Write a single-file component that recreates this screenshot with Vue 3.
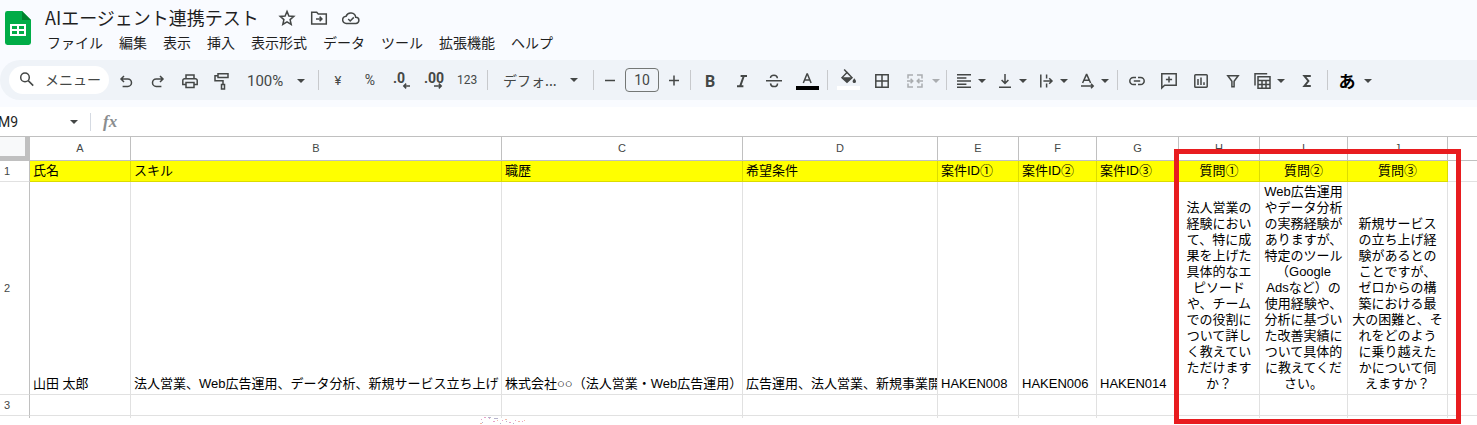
<script setup>
import { ref } from 'vue'

const menus = ['ファイル', '編集', '表示', '挿入', '表示形式', 'データ', 'ツール', '拡張機能', 'ヘルプ']

const undo = { label: '元に戻す', d: 'M8 5 5 8l3 3M5.4 8h6.4a3.7 3.7 0 0 1 0 7.4H6.6' }
const redo = { label: 'やり直す', d: 'M12 5l3 3-3 3M14.6 8H8.2a3.7 3.7 0 0 0 0 7.4h5.2' }
const print = { label: '印刷', d: 'M6 7.4V4h8v3.4M5.6 13.4H2.8V9.5a1.8 1.8 0 0 1 1.8-1.8h10.8a1.8 1.8 0 0 1 1.8 1.8v3.9h-2.8M6 11.6h8v4.8H6z' }
const paint = { label: '書式を貼り付け', d: 'M6 2.8h10v3.8H6zM6 4.8H3v5h8v3.4M9.5 13.4h3v4.6h-3z' }

const numberTools = [
  { label: '通貨', text: '¥', size: 13, x: 10, y: 13 },
  { label: 'パーセント', text: '%', size: 14, x: 10, y: 13 },
  { label: '小数点以下の桁数を減らす', text: '.0', size: 14, bold: true, x: 7, y: 11, d: 'M18 15h-6M14.2 12.6 11.8 15l2.4 2.4' },
  { label: '小数点以下の桁数を増やす', text: '.00', size: 14, bold: true, x: 10, y: 11, d: 'M10 15h7M14.8 12.6l2.4 2.4-2.4 2.4' },
  { label: '表示形式の詳細', text: '123', size: 12, x: 10, y: 12, wide: true }
]

const styleTools = [
  { label: '太字', text: 'B', size: 16, bold: true, x: 10, y: 15 },
  { label: '斜体', d: 'M8.6 5H15M5 15.2h6.4M11.8 5 8.2 15.2', weight: 2 },
  { label: '取り消し線', d: 'M2 9.8h16M13.4 7.2c-.2-2-1.6-3-3.4-3s-3.5 1-3.5 2.8M6.5 12.4c.2 2 1.6 3.2 3.5 3.2s3.5-1 3.5-3.2' },
  { label: 'テキストの色', d: 'M6.3 12 10 3h.4l3.7 9M7.6 9h5.2', bar: '#000000', wide: true }
]

const cellTools = [
  { label: '塗りつぶしの色', d: 'M6.2-1.6 9 1.4M9 1.4 4 6.6l5 4.6 5-4.6z', f: 'M4 6.2h10l-5 5zM16.3 7.2c1 1.4 1.7 2.2 1.7 3.2a1.7 1.7 0 0 1-3.4 0c0-1 .7-1.8 1.7-3.2z', bar: '#ffffff', wide: true },
  { label: '枠線', d: 'M3.8 3.8h12.4v12.4H3.8zM10 3.8v12.4M3.8 10h12.4', wide: true },
  { label: 'セルを結合', d: 'M8 4H3v3.4M3 12.6V16h5M12 4h5v3.4M17 12.6V16h-5M2 10h5.6M5.6 7.8 7.8 10l-2.2 2.2M18 10h-5.6M14.4 7.8 12.2 10l2.2 2.2', drop: true, loose: true, disabled: true }
]

const layoutTools = [
  { label: '水平方向の配置', d: 'M3 3.8h14M3 7h9.4M3 10.1h14M3 13.2h9.4M3 16.3h14', drop: true },
  { label: '垂直方向の配置', d: 'M10 3v9M6.6 9l3.4 3.4L13.4 9M4 16.2h12', drop: true },
  { label: 'テキストを折り返す', d: 'M4.8 3.4v13.2M10.6 3.4v4M10.6 12.6v4M7.4 10h8.4M13.2 7.2 16 10l-2.8 2.8', drop: true },
  { label: 'テキストの回転', d: 'M5.6 12 9.4 3.6h.4l3.8 8.4M7 9.2h5.2M4 15h12M14 12.8l2.2 2.2-2.2 2.2', drop: true }
]

const insertTools = [
  { label: 'リンクを挿入', d: 'M9 6.4H6.4a3.6 3.6 0 0 0 0 7.2H9M11 6.4h2.6a3.6 3.6 0 0 1 0 7.2H11M6.8 10h6.4' },
  { label: 'コメントを挿入', d: 'M2.8 17V2.8h14.4v11.4H5.6zM10 5.4v6.2M6.9 8.5h6.2' },
  { label: 'グラフを挿入', d: 'M4.6 3.8h10.8a.8.8 0 0 1 .8.8v10.8a.8.8 0 0 1-.8.8H4.6a.8.8 0 0 1-.8-.8V4.6a.8.8 0 0 1 .8-.8zM7 8v6M10 6.4V14M13 11.2V14' },
  { label: 'フィルタを作成', d: 'M4.8 4.8h10.4l-4.1 5.4v5.6H8.9v-5.6z' },
  { label: 'テーブル', d: 'M2 14.4V2.8h12.2M5 5.8h12v11.4H5zM5 9.6h12M9 9.6v7.6M13 9.6v7.6M5 13.4h12', drop: true },
  { label: '関数', d: 'M13.8 5H7.4l4 5-4 5h6.4', weight: 2, wide: true }
]

const nameBox = ref('M9')
const fontSize = ref('10')

const columns = ['A', 'B', 'C', 'D', 'E', 'F', 'G', 'H', 'I', 'J']

const titles = ['氏名', 'スキル', '職歴', '希望条件', '案件ID①', '案件ID②', '案件ID③', '質問①', '質問②', '質問③']

const person = [
  '山田 太郎',
  '法人営業、Web広告運用、データ分析、新規サービス立ち上げ',
  '株式会社○○（法人営業・Web広告運用）',
  '広告運用、法人営業、新規事業開',
  'HAKEN008',
  'HAKEN006',
  'HAKEN014',
  '法人営業の\n経験におい\nて、特に成\n果を上げた\n具体的なエ\nピソード\nや、チーム\nでの役割に\nついて詳し\nく教えてい\nただけます\nか？',
  'Web広告運用\nやデータ分析\nの実務経験が\nありますが、\n特定のツール\n（Google\nAdsなど）の\n使用経験や、\n分析に基づい\nた改善実績に\nついて具体的\nに教えてくだ\nさい。',
  '新規サービス\nの立ち上げ経\n験があるとの\nことですが、\nゼロからの構\n築における最\n大の困難と、そ\nれをどのよう\nに乗り越えた\nかについて伺\nえますか？'
]

const groups = [numberTools, styleTools, cellTools, layoutTools, insertTools]
</script>

<template>
  <div class="app">
    <header class="top">
      <a class="logo" href="#" aria-label="スプレッドシート ホーム">
        <svg width="26" height="34" viewBox="0 0 26 34">
          <path d="M2.4 0H17l9 9v22.600a2.400 2.400 0 0 1-2.400 2.400H2.400A2.400 2.400 0 0 1 0 31.600V2.400A2.400 2.400 0 0 1 2.400 0z" fill="#00ac47" />
          <path d="M17 0l9 9h-9z" fill="#00832d" />
          <path d="M5 13h16v12H5z" fill="#fff" />
          <path d="M7 15h5v3H7zM14 15h5v3h-5zM7 20h5v3H7zM14 20h5v3h-5z" fill="#00ac47" />
        </svg>
      </a>
      <div class="heading">
        <div class="title-row">
          <h1>AIエージェント連携テスト</h1>
          <button class="mini" aria-label="スターを付ける">
            <svg width="18" height="18" viewBox="0 0 18 18"><path d="M9 2.400l1.900 4.600 4.900.4-3.700 3.200 1.100 4.900L9 12.900l-4.200 2.600 1.100-4.900L2.200 7.400l4.900-.4z" /></svg>
          </button>
          <button class="mini" aria-label="移動">
            <svg width="18" height="18" viewBox="0 0 18 18"><path d="M1.700 4V3.200h5l1.600 1.800h8v10H1.700zM6 9.900h5.600M9.600 7.600l2.300 2.300-2.300 2.300" /></svg>
          </button>
          <button class="mini" aria-label="ドキュメントのステータス">
            <svg width="18" height="18" viewBox="0 0 18 18"><path d="M4.400 14.400a3.600 3.600 0 0 1-.3-7.200 5 5 0 0 1 9.600 1 3.100 3.100 0 0 1 .2 6.200zM6.200 10l2 2 3.600-3.600" /></svg>
          </button>
        </div>
        <nav class="menus">
          <button v-for="menu in menus" :key="menu">{{ menu }}</button>
        </nav>
      </div>
    </header>

    <div class="band">
      <div class="toolbar">
        <label class="search">
          <svg class="icon" width="20" height="20" viewBox="0 0 20 20"><circle cx="8" cy="8.400" r="4.300" /><path d="M11.200 11.600l5 5" /></svg>
          <input type="text" placeholder="メニュー" aria-label="メニューを検索" />
        </label>
        <button v-for="tool in [undo, redo, print, paint]" :key="tool.label" class="tool" :aria-label="tool.label">
          <svg class="icon" width="20" height="20" viewBox="0 0 20 20"><path :d="tool.d" /></svg>
        </button>
        <label class="pick zoom">
          <select aria-label="ズーム"><option>100%</option></select>
          <svg class="caret" width="10" height="6" viewBox="0 0 10 6"><path d="M1 1h8L5 5z" /></svg>
        </label>
        <template v-for="(group, g) in groups" :key="g">
          <span class="sep"></span>
          <template v-if="g === 1">
            <label class="pick font">
              <select aria-label="フォント"><option>デフォ...</option></select>
              <svg class="caret" width="10" height="6" viewBox="0 0 10 6"><path d="M1 1h8L5 5z" /></svg>
            </label>
            <span class="sep"></span>
            <button class="tool step" aria-label="フォントサイズを縮小">
              <svg class="icon" width="20" height="20" viewBox="0 0 20 20"><path d="M5 9.500h10" /></svg>
            </button>
            <input v-model="fontSize" class="size" type="text" aria-label="フォントサイズ" />
            <button class="tool step" aria-label="フォントサイズを拡大">
              <svg class="icon" width="20" height="20" viewBox="0 0 20 20"><path d="M5 9.500h10M10 4.500v10" /></svg>
            </button>
            <span class="sep"></span>
          </template>
          <button
            v-for="tool in group"
            :key="tool.label"
            class="tool"
            :class="{ wide: tool.wide, drop: tool.drop, loose: tool.loose }"
            :disabled="tool.disabled"
            :aria-label="tool.label"
          >
            <svg class="icon" width="20" height="20" viewBox="0 0 20 20">
              <path v-if="tool.d" :d="tool.d" :stroke-width="tool.weight || 1.5" />
              <path v-if="tool.f" class="solid" :d="tool.f" />
              <rect v-if="tool.bar" class="bar" x="-1" y="15" width="23" height="4" :fill="tool.bar" />
              <text v-if="tool.text" :class="{ bold: tool.bold }" :x="tool.x" :y="tool.y + 1" :font-size="tool.size">{{ tool.text }}</text>
            </svg>
            <svg v-if="tool.drop" class="caret" width="10" height="6" viewBox="0 0 10 6"><path d="M1 1h8L5 5z" /></svg>
          </button>
        </template>
        <span class="sep"></span>
        <button class="tool drop loose kana">
          <span>あ</span>
          <svg class="caret" width="10" height="6" viewBox="0 0 10 6"><path d="M1 1h8L5 5z" /></svg>
        </button>
      </div>
    </div>

    <div class="formula">
      <input v-model="nameBox" class="name" type="text" aria-label="名前ボックス" />
      <svg class="caret" width="10" height="6" viewBox="0 0 10 6"><path d="M1 1h8L5 5z" /></svg>
      <span class="rule"></span>
      <label class="fx" for="formula-input">fx</label>
      <input id="formula-input" class="entry" type="text" />
    </div>

    <main class="sheet">
      <table>
        <colgroup>
          <col class="c-head" />
          <col v-for="c in columns" :key="c" :class="'c-' + c.toLowerCase()" />
          <col />
        </colgroup>
        <thead>
          <tr>
            <td class="corner"></td>
            <th v-for="c in columns" :key="c" scope="col">{{ c }}</th>
            <th></th>
          </tr>
        </thead>
        <tbody>
          <tr class="titles">
            <th scope="row">1</th>
            <td v-for="(t, i) in titles" :key="t" :class="{ center: i > 6 }">{{ t }}</td>
            <td class="rest"></td>
          </tr>
          <tr class="person">
            <th scope="row">2</th>
            <td v-for="(t, i) in person" :key="i" :class="{ center: i > 6 }">{{ t }}</td>
            <td class="rest"></td>
          </tr>
          <tr class="blank">
            <th scope="row">3</th>
            <td v-for="c in columns" :key="c"></td>
            <td class="rest"></td>
          </tr>
          <tr class="cut">
            <th></th>
            <td v-for="c in columns" :key="c"></td>
            <td class="rest"></td>
          </tr>
        </tbody>
      </table>
      <div class="highlight"></div>
      <svg class="specks" width="62" height="8" viewBox="0 0 62 8" aria-hidden="true">
        <path d="M1 2h1v1H1zM4 0h2v1H4zM9 1h1v1H9zM13 4h2v1h-2zM22 3h1v1h-1zM29 5h2v1h-2zM35 3h1v1h-1zM42 4h1v1h-1z" fill="#e6a3c8" />
        <path d="M2 5h1v1H2zM8 0h3v1H8zM14 1h4v1h-4zM20 6h1v1h-1zM26 4h1v1h-1zM33 6h1v1h-1z" fill="#b5b3cc" />
        <path d="M0 6h2v1H0zM17 3h1v1h-1zM25 2h2v1h-2zM38 4h2v1h-2zM44 3h1v1h-1z" fill="#f2b9a8" />
      </svg>
    </main>
  </div>
</template>

<style>
body {
  margin: 0;
  background: #fff;
}
</style>

<style scoped>
.app {
  color: #1f1f1f;
  font-family: "Liberation Sans", "Noto Sans CJK JP", sans-serif;
}

button,
input,
select {
  margin: 0;
  padding: 0;
  border: 0;
  background: none;
  color: inherit;
  font: inherit;
}

.top {
  display: flex;
  gap: 14px;
  height: 60px;
  padding-left: 5px;
  background: #f9fbff;
  box-sizing: border-box;
  font-family: "Noto Sans CJK JP", sans-serif;
}

.logo {
  padding-top: 11px;
}

.logo svg,
.mini svg {
  display: block;
}

.title-row {
  display: flex;
  align-items: center;
  gap: 14px;
  height: 24px;
  padding-top: 6px;
}

h1 {
  margin: 0 5px 0 0;
  padding-bottom: 2px;
  font-size: 18px;
  font-weight: 400;
  line-height: 24px;
}

.mini path {
  fill: none;
  stroke: #444746;
  stroke-width: 1.5;
}

.menus {
  display: flex;
  gap: 16px;
  padding: 2px 0 0 2px;
  font-size: 14px;
  line-height: 20px;
}

.band {
  padding-bottom: 7px;
  background: #f9fbff;
}

.toolbar {
  display: flex;
  align-items: center;
  height: 40px;
  padding-left: 9px;
  border-radius: 20px 0 0 20px;
  background: #eff3f8;
  color: #444746;
}

.search {
  display: flex;
  align-items: center;
  gap: 8px;
  width: 100px;
  height: 28px;
  margin-right: 1px;
  padding: 0 0 2px 8px;
  border-radius: 14px;
  background: #fff;
  box-sizing: border-box;
}

.search input {
  width: 60px;
  font-family: "Noto Sans CJK JP", sans-serif;
  font-size: 14px;
  line-height: 20px;
}

.search input::placeholder {
  color: #444746;
  opacity: 1;
}

.tool {
  display: flex;
  align-items: center;
  justify-content: center;
  flex: none;
  width: 32px;
  height: 28px;
  padding-top: 2px;
  box-sizing: border-box;
}

.tool.wide {
  width: 34px;
}

.tool.step {
  width: 26px;
}

.tool.drop {
  justify-content: flex-start;
  gap: 3px;
  width: 41px;
  padding-left: 4px;
}

.tool.loose {
  gap: 6px;
  width: 44px;
  padding-left: 6px;
}

.tool:disabled {
  opacity: 0.4;
}

.icon {
  flex: none;
  overflow: visible;
}

.icon path,
.icon circle {
  fill: none;
  stroke: #444746;
  stroke-width: 1.5;
}

.icon path[stroke-width="2"] {
  stroke-width: 2;
}

.icon .solid {
  fill: #444746;
  stroke: none;
}

.icon text {
  fill: #444746;
  font-family: Roboto, sans-serif;
  text-anchor: middle;
}

.icon .bold {
  font-weight: 700;
}

.caret {
  flex: none;
}

.caret path {
  fill: #444746;
}

.sep {
  flex: none;
  width: 1px;
  height: 20px;
  margin: 0 3px;
  background: #c7c9cc;
}

.pick {
  display: flex;
  align-items: center;
  flex: none;
  height: 28px;
  padding-top: 2px;
  box-sizing: border-box;
}

.pick select {
  appearance: none;
  font-size: 15px;
  line-height: 20px;
}

.zoom {
  width: 77px;
  padding-left: 9px;
}

.zoom select {
  width: 49px;
  font-family: Roboto, sans-serif;
}

.font {
  width: 99px;
  padding: 0 0 0 12px;
}

.font select {
  width: 66px;
  font-family: "Noto Sans CJK JP", sans-serif;
  font-size: 14px;
}

.size {
  width: 34px;
  height: 24px;
  margin: 0 2px;
  border: 1px solid #747775;
  border-radius: 4px;
  box-sizing: border-box;
  font-family: Roboto, sans-serif;
  font-size: 14px;
  text-align: center;
}

.kana span {
  width: 20px;
  color: #000;
  font-family: "Noto Sans CJK JP", sans-serif;
  font-size: 17px;
  font-weight: 700;
  line-height: 20px;
}

.formula {
  display: flex;
  align-items: center;
  height: 29px;
}

.name {
  width: 71px;
  margin-left: -2px;
  font-family: Roboto, sans-serif;
  font-size: 14px;
}

.rule {
  width: 1px;
  height: 18px;
  margin: 0 12px 0 11px;
  background: #d5dae2;
}

.fx {
  color: #8a8d8f;
  font-family: "Liberation Serif", serif;
  font-size: 17px;
  font-style: italic;
  font-weight: 700;
}

.entry {
  flex: 1;
  margin-left: 12px;
}

.sheet {
  position: relative;
  padding-bottom: 8px;
}

table {
  width: 100%;
  border-spacing: 0;
  border-top: 1px solid #c0c0c0;
  table-layout: fixed;
}

.c-head { width: 30px; }
.c-a { width: 101px; }
.c-b { width: 371px; }
.c-c { width: 241px; }
.c-d { width: 195px; }
.c-e { width: 81px; }
.c-f { width: 78px; }
.c-g { width: 82px; }
.c-h { width: 81px; }
.c-i { width: 88px; }
.c-j { width: 100px; }

th,
td {
  overflow: hidden;
  border-right: 1px solid #e1e1e1;
  border-bottom: 1px solid #e1e1e1;
  box-sizing: border-box;
}

th {
  padding: 0;
  border-color: #c0c0c0;
  color: #444746;
  font-size: 11px;
  font-weight: 400;
}

thead tr {
  height: 24px;
}

thead th {
  padding-bottom: 2px;
}

thead .corner {
  padding: 0;
  border-right: 5px solid #c0c0c0;
  border-bottom: 5px solid #c0c0c0;
  background: #f8f9fa;
}

tbody th {
  padding-left: 4px;
  border-bottom-color: #e1e1e1;
  text-align: left;
}

tbody td {
  padding: 2px 3px;
  color: #000;
  font-size: 13px;
  line-height: 16px;
  vertical-align: bottom;
  white-space: pre;
}

tbody .center {
  padding: 2px 0;
  text-align: center;
}

.titles,
.blank {
  height: 21px;
}

.titles td {
  border-color: #dcdc00;
  background: #ff0;
}

.person {
  height: 213px;
}

thead th:last-child,
tbody .rest {
  border-right: 0;
}

.titles .rest {
  border-color: #e1e1e1;
  background: #fff;
}

.cut {
  height: 2px;
}

.cut td,
.cut th {
  padding: 0;
  border-bottom: 0;
  line-height: 0;
}

.highlight {
  position: absolute;
  top: 13px;
  left: 1174px;
  width: 287px;
  height: 275px;
  border: 5px solid #e81c1f;
  box-sizing: border-box;
  pointer-events: none;
}

.specks {
  position: absolute;
  top: 281px;
  left: 480px;
}
</style>
